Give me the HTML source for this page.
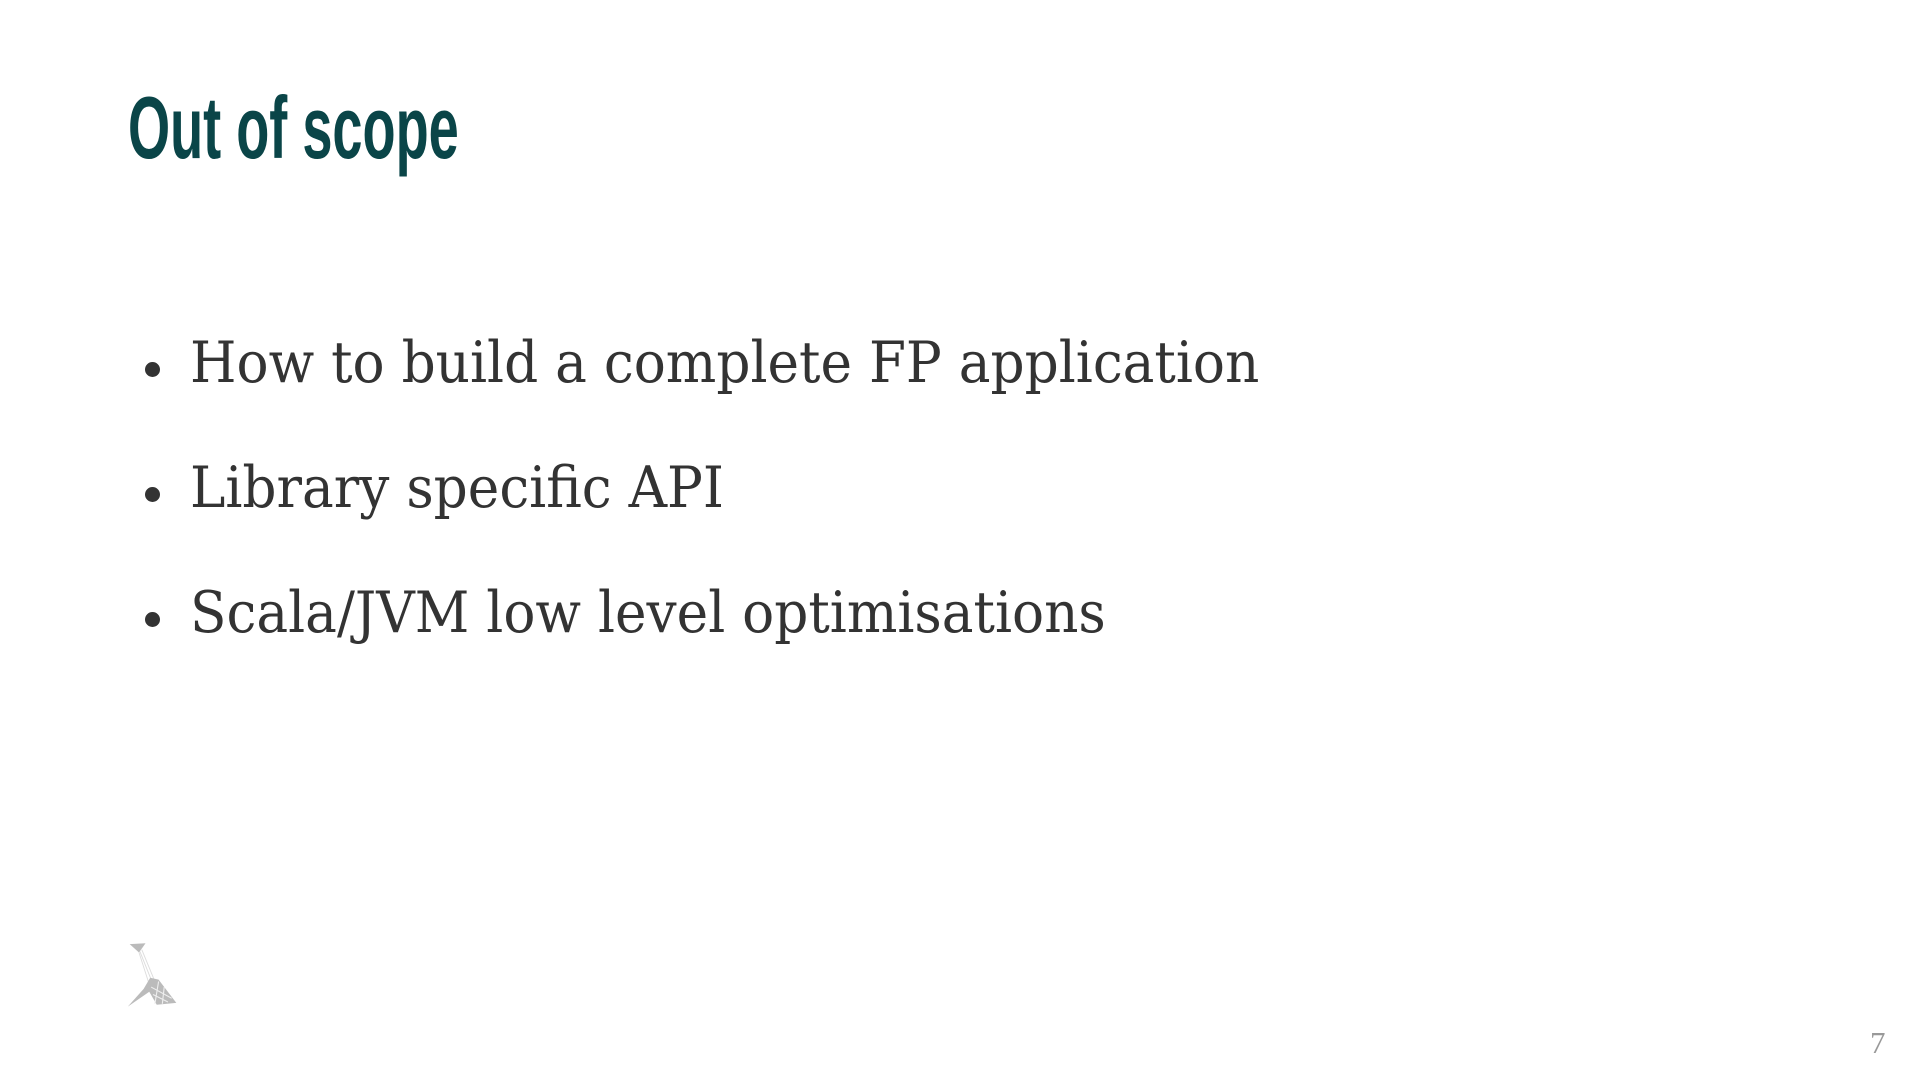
<!DOCTYPE html>
<html><head><meta charset="utf-8"><style>
html,body{margin:0;padding:0;background:#fff;width:1920px;height:1080px;overflow:hidden;position:relative}
.t{position:absolute;left:128px;top:84px;font-family:"Liberation Sans Narrow","Liberation Sans",sans-serif;font-weight:bold;font-size:88px;color:#0a4548;white-space:nowrap;transform-origin:0 0;transform:scaleX(0.615);line-height:1}
.b{position:absolute;left:190px;font-family:"DejaVu Serif","Liberation Serif",serif;font-size:57px;color:#333;white-space:nowrap;line-height:1;transform-origin:0 0;transform:scaleX(0.935)}
.d{position:absolute;left:145px;width:15px;height:15px;border-radius:50%;background:#333}
.n{position:absolute;left:1870px;top:1025px;font-family:"Liberation Serif",serif;font-size:31px;color:#999}
</style></head><body>
<div class="t">Out of scope</div>
<div class="d" style="top:362px"></div><div class="b" style="top:335px">How to build a complete FP application</div>
<div class="d" style="top:487px"></div><div class="b" style="top:460px">Library specific API</div>
<div class="d" style="top:612px"></div><div class="b" style="top:585px">Scala/JVM low level optimisations</div>
<svg style="position:absolute;left:125px;top:938px" width="56" height="72" viewBox="0 0 60 72">
<polygon points="5,4 22,3 15,13" fill="#bbb"/>
<path d="M16,12 L28,42 M18,10 L32,44 M15,13 L25,44" stroke="#ddd" stroke-width="1" fill="none"/>
<polygon points="27,40 36,42 52,63 55,67 34,69 26,55 3,71 20,52" fill="#bbb"/>
<path d="M28,50 L50,62 M30,58 L46,66 M36,44 L32,68 M42,50 L40,68" stroke="#eee" stroke-width="1.2" fill="none"/>
</svg>
<div class="n">7</div>
</body></html>
